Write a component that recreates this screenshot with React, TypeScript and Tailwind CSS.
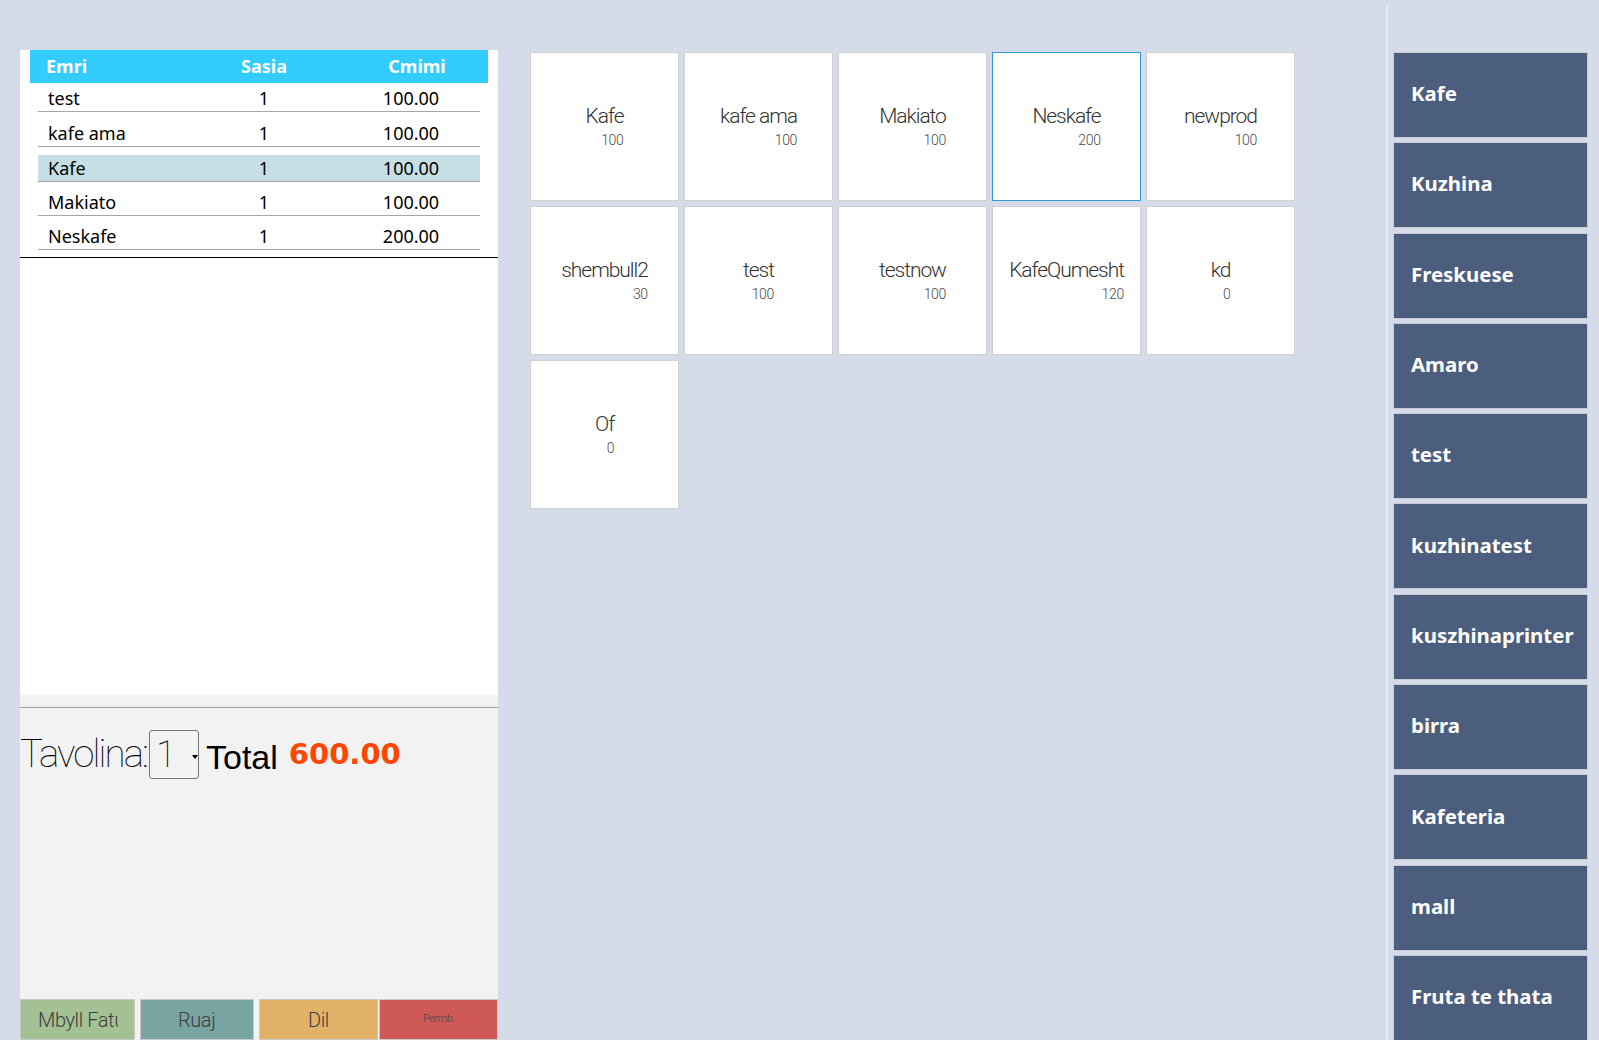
const orderRows = [
  { name: "test", qty: 1, price: "100.00" },
  { name: "kafe ama", qty: 1, price: "100.00" },
  { name: "Kafe", qty: 1, price: "100.00", active: true },
  { name: "Makiato", qty: 1, price: "100.00" },
  { name: "Neskafe", qty: 1, price: "200.00" },
];

const products = [
  { name: "Kafe", price: "100" },
  { name: "kafe ama", price: "100" },
  { name: "Makiato", price: "100" },
  { name: "Neskafe", price: "200", selected: true },
  { name: "newprod", price: "100" },
  { name: "shembull2", price: "30" },
  { name: "test", price: "100" },
  { name: "testnow", price: "100" },
  { name: "KafeQumesht", price: "120" },
  { name: "kd", price: "0" },
  { name: "Of", price: "0" },
];

const categories = [
  "Kafe",
  "Kuzhina",
  "Freskuese",
  "Amaro",
  "test",
  "kuzhinatest",
  "kuszhinaprinter",
  "birra",
  "Kafeteria",
  "mall",
  "Fruta te thata",
];

function OrderPanel() {
  return (
    <div className="mt-[50px] ml-[20px] flex h-[990px] w-[478px] shrink-0 flex-col">
      <div className="h-[645px] bg-white">
        <div className="mx-[10px] grid h-[33px] grid-cols-[160px_148px_150px] items-center bg-[#33ccff] font-['Noto_Sans',sans-serif] text-[18px] font-bold text-white">
          <div className="pl-[16px]">Emri</div>
          <div className="text-center">Sasia</div>
          <div className="pl-[8px] text-center">Cmimi</div>
        </div>
        <div className="mx-[18px]">
          {orderRows.map((r, i) => (
            <div
              key={r.name}
              className={
                "grid h-[27px] grid-cols-[152px_148px_142px] items-center border-b border-[#a6a6a6] font-['Noto_Sans',sans-serif] text-[18px] text-black " +
                (i === 0 ? "mt-[2px] " : i > 2 ? "mt-[7px] " : "mt-[8px] ") +
                (r.active ? "bg-[#c5dfe5]" : "")
              }
            >
              <div className="pl-[10px]">{r.name}</div>
              <div className="text-center">{r.qty}</div>
              <div className="pl-[4px] text-center">{r.price}</div>
            </div>
          ))}
        </div>
        <div className="mt-[7px] border-b border-black" />
      </div>
      <div className="flex flex-1 flex-col bg-[#f2f2f2]">
        <div className="mt-[12px] border-t border-[#a0a0a0]" />
        <div className="mt-[22px] flex h-[49px] items-center">
          <span className="font-['Roboto',sans-serif] text-[38.5px] font-thin leading-none tracking-tighter text-black">
            Tavolina:
          </span>
          <div className="ml-[2px] flex h-[49px] w-[50px] items-center rounded-[3px] border border-[#767676] pl-[6px]">
            <span className="font-['Roboto',sans-serif] text-[37px] font-thin leading-none text-black">1</span>
            <span className="ml-[16px] mt-[4px] h-0 w-0 border-x-[3px] border-t-[4px] border-x-transparent border-t-black" />
          </div>
          <span className="ml-[7px] mt-[4px] font-['Liberation_Sans',Arial,sans-serif] text-[34px] leading-none text-black">
            Total
          </span>
          <span className="ml-[11px] font-['DejaVu_Sans',sans-serif] text-[29px] font-bold leading-none text-[#ff4500]">
            600.00
          </span>
        </div>
        <div className="flex-1" />
        <div className="flex h-[41px] font-['Roboto',sans-serif] font-light tracking-tight text-[#3e3e3e]">
          <button className="flex w-[115px] items-center border border-[#c9c9c9] bg-[#a4c194] pl-[17px] text-[20px]">
            <span className="block w-[80px] overflow-hidden whitespace-nowrap text-left">Mbyll Fatura</span>
          </button>
          <button className="ml-[5px] w-[114px] border border-[#c9c9c9] bg-[#78a4a2] text-[20px]">Ruaj</button>
          <button className="ml-[5px] w-[120px] border border-[#c9c9c9] bg-[#e2b168] text-[20px]">Dil</button>
          <button className="ml-[1px] w-[119px] border border-[#c9c9c9] bg-[#cf5a55] text-[11px] tracking-tighter text-[#444]">
            Permb.
          </button>
        </div>
      </div>
    </div>
  );
}

function ProductGrid() {
  return (
    <div className="ml-[32px] mt-[52px] flex-1">
      <div className="grid grid-cols-[149px_149px_149px_149px_149px] gap-[5px]">
        {products.map((p) => (
          <div
            key={p.name}
            className={
              "flex h-[149px] items-center justify-center border bg-white " +
              (p.selected ? "border-[#3399dd]" : "border-[#d0d0d0]")
            }
          >
            <div className="inline-flex flex-col items-end font-['Roboto',sans-serif] font-light">
              <span className="text-[21px] leading-[24px] tracking-tighter text-[#333]">{p.name}</span>
              <span className="mt-[4px] text-[14px] leading-[17px] tracking-tight text-[#4a4a4a]">{p.price}</span>
            </div>
          </div>
        ))}
      </div>
    </div>
  );
}

function CategoryBar() {
  return (
    <div className="mt-[5px] flex w-[213px] shrink-0 flex-col gap-[4.3px] border-l-2 border-[#e4e8f0] pl-[5px] pt-[47px]">
      {categories.map((c) => (
        <div
          key={c}
          className="flex h-[86px] w-[195px] shrink-0 items-center border border-[#c8ccd4] bg-[#4c5e7e] pb-[3px] pl-[17px] font-['Noto_Sans',sans-serif] text-[20.4px] font-bold text-white"
        >
          {c}
        </div>
      ))}
    </div>
  );
}

export default function App() {
  return (
    <div className="flex h-[1040px] w-full overflow-hidden bg-[#d5dbe8]">
      <OrderPanel />
      <ProductGrid />
      <CategoryBar />
    </div>
  );
}
